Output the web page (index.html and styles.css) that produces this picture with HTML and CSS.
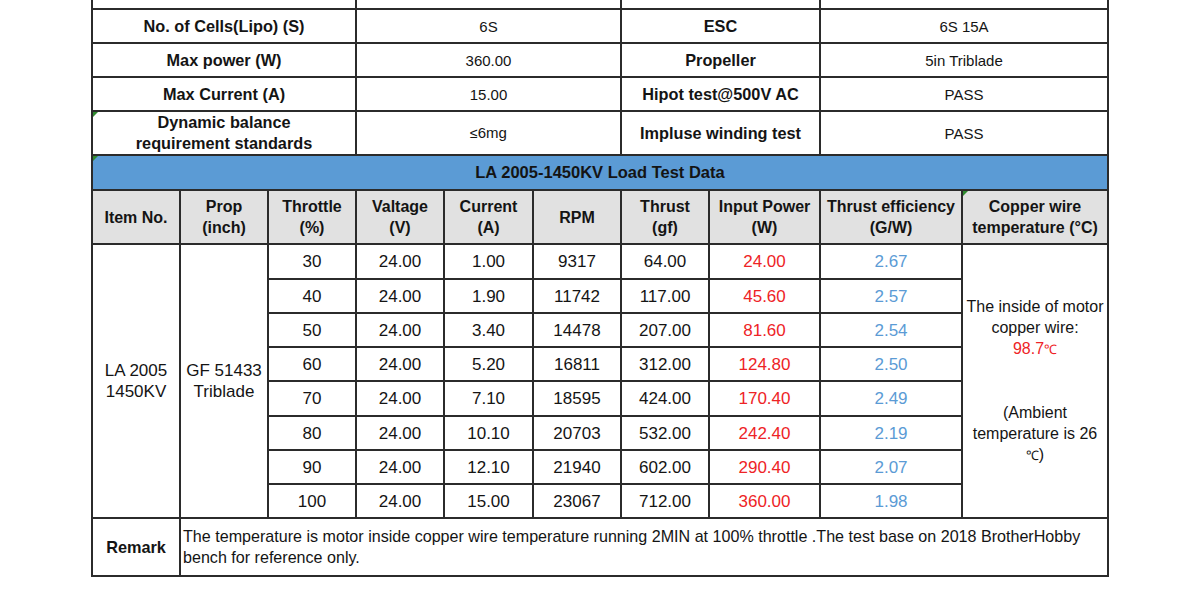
FILE: index.html
```html
<!DOCTYPE html>
<html lang="en">
<head>
<meta charset="utf-8">
<title>LA 2005-1450KV Load Test Data</title>
<link rel="stylesheet" href="styles.css">
</head>
<body>
<table class="sheet">
  <colgroup>
    <col class="w88"><col class="w88"><col class="w88"><col class="w88"><col class="w89">
    <col class="w88"><col class="w88"><col class="w111"><col class="w142"><col class="w146">
  </colgroup>
  <tr class="h34">
    <td colspan="3"></td><td colspan="3"></td><td colspan="2"></td><td colspan="2"></td>
  </tr>
  <tr class="h34">
    <th colspan="3" class="lbl">No. of Cells(Lipo) (S)</th><td colspan="3" class="val">6S</td>
    <th colspan="2" class="lbl">ESC</th><td colspan="2" class="val">6S 15A</td>
  </tr>
  <tr class="h34">
    <th colspan="3" class="lbl">Max power (W)</th><td colspan="3" class="val">360.00</td>
    <th colspan="2" class="lbl">Propeller</th><td colspan="2" class="val">5in Triblade</td>
  </tr>
  <tr class="h34">
    <th colspan="3" class="lbl">Max Current (A)</th><td colspan="3" class="val">15.00</td>
    <th colspan="2" class="lbl">Hipot test@500V AC</th><td colspan="2" class="val">PASS</td>
  </tr>
  <tr class="h44">
    <th colspan="3" class="lbl note">Dynamic balance<br>requirement standards</th><td colspan="3" class="val"><span class="le">≤</span>6mg</td>
    <th colspan="2" class="lbl">Impluse winding test</th><td colspan="2" class="val">PASS</td>
  </tr>
  <tr class="h35">
    <th colspan="10" class="title note">LA 2005-1450KV Load Test Data</th>
  </tr>
  <tr class="h54 head">
    <th>Item No.</th><th>Prop<br>(inch)</th><th>Throttle<br>(%)</th><th>Valtage<br>(V)</th><th>Current<br>(A)</th>
    <th>RPM</th><th>Thrust<br>(gf)</th><th>Input Power<br>(W)</th><th>Thrust efficiency<br>(G/W)</th><th class="note">Copper wire<br>temperature (°C)</th>
  </tr>
  <tr class="h35 data">
    <td rowspan="8" class="big">LA 2005<br>1450KV</td><td rowspan="8" class="big">GF 51433<br>Triblade</td>
    <td>30</td><td>24.00</td><td>1.00</td><td>9317</td><td>64.00</td><td class="red">24.00</td><td class="blue">2.67</td>
    <td rowspan="8" class="copper">The inside of motor<br>copper wire:<br><span class="red">98.7<span class="deg">℃</span></span><br><br><br>(Ambient<br>temperature is 26<br><span class="deg">℃</span>)</td>
  </tr>
  <tr class="h34 data"><td>40</td><td>24.00</td><td>1.90</td><td>11742</td><td>117.00</td><td class="red">45.60</td><td class="blue">2.57</td></tr>
  <tr class="h34 data"><td>50</td><td>24.00</td><td>3.40</td><td>14478</td><td>207.00</td><td class="red">81.60</td><td class="blue">2.54</td></tr>
  <tr class="h34 data"><td>60</td><td>24.00</td><td>5.20</td><td>16811</td><td>312.00</td><td class="red">124.80</td><td class="blue">2.50</td></tr>
  <tr class="h35 data"><td>70</td><td>24.00</td><td>7.10</td><td>18595</td><td>424.00</td><td class="red">170.40</td><td class="blue">2.49</td></tr>
  <tr class="h34 data"><td>80</td><td>24.00</td><td>10.10</td><td>20703</td><td>532.00</td><td class="red">242.40</td><td class="blue">2.19</td></tr>
  <tr class="h34 data"><td>90</td><td>24.00</td><td>12.10</td><td>21940</td><td>602.00</td><td class="red">290.40</td><td class="blue">2.07</td></tr>
  <tr class="h34 data"><td>100</td><td>24.00</td><td>15.00</td><td>23067</td><td>712.00</td><td class="red">360.00</td><td class="blue">1.98</td></tr>
  <tr class="h58">
    <th class="lbl">Remark</th>
    <td colspan="9" class="remark">The temperature is motor inside copper wire temperature running 2MIN at 100% throttle .The test base on 2018 BrotherHobby bench for reference only.</td>
  </tr>
</table>
</body>
</html>
```
FILE: styles.css
```css
html, body {
  margin: 0;
  padding: 0;
  background: #ffffff;
}

body {
  font-family: "Liberation Sans", Arial, sans-serif;
  color: #141414;
  height: 608px;
  overflow: hidden;
}

.sheet {
  border-collapse: collapse;
  table-layout: fixed;
  width: 1018px;
  margin: -26px 0 0 91px;
}

.w88 { width: 88px; }
.w89 { width: 89px; }
.w111 { width: 111px; }
.w142 { width: 142px; }
.w146 { width: 146px; }

.sheet th,
.sheet td {
  border: 2px solid #2b2b2b;
  padding: 0 2px;
  text-align: center;
  vertical-align: middle;
  line-height: 21px;
  white-space: nowrap;
}

.h34 { height: 34px; }
.h35 { height: 35px; }
.h44 { height: 44px; }
.h54 { height: 54px; }
.h58 { height: 58px; }

.lbl {
  font-size: 16.3px;
  font-weight: bold;
  line-height: 20px;
}

.val {
  font-size: 15px;
  font-weight: normal;
}

.le {
  font-size: 14px;
}

.title {
  background: #5b9bd5;
  font-size: 16.5px;
  font-weight: bold;
}

.head th {
  background: #e1e1e1;
  font-size: 16px;
  font-weight: bold;
}

.data td {
  font-size: 17px;
}

.data td.copper {
  font-size: 16px;
  padding: 0;
}

.deg {
  font-size: 13px;
}

.red { color: #ee2326; }
.blue { color: #5b9bd5; }

.sheet td.remark {
  text-align: left;
  font-size: 16.1px;
  white-space: normal;
  padding: 0 2px;
}

.note {
  position: relative;
}

.note::before {
  content: "";
  position: absolute;
  left: 0;
  top: 0;
  border-top: 5px solid #2f8a2f;
  border-right: 5px solid transparent;
}
```
